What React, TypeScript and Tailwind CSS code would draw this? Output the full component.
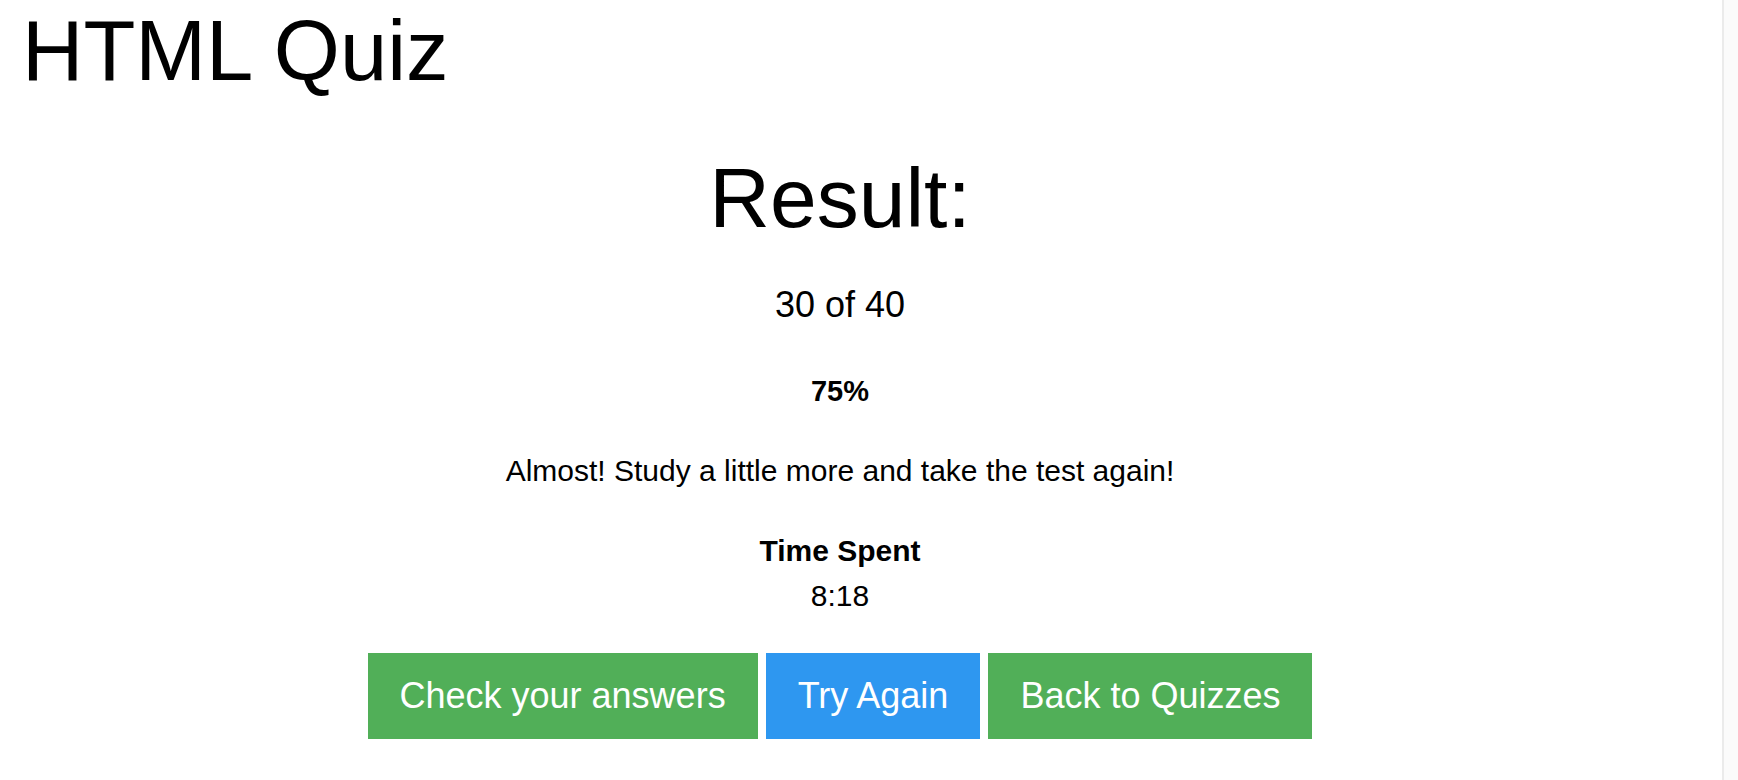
import React from 'react';

const font = { fontFamily: '"Liberation Sans", Arial, sans-serif' };

function App() {
  const score = 30;
  const total = 40;
  const percent = Math.round((score / total) * 100);

  return (
    <div className="flex min-h-[780px] w-full bg-white text-black" style={font}>
      {/* page content */}
      <div className="flex-1 pr-[42px]">
        <h1 className="ml-[22px] mt-[3px] text-[85px] leading-[96px] font-normal">HTML Quiz</h1>

        <div className="flex flex-col items-center text-center">
          <h2 className="mt-[51px] text-[84px] leading-[96px] font-normal">Result:</h2>
          <p className="mt-[39px] text-[36px] leading-[40px]">
            {score} of {total}
          </p>
          <p className="mt-[49px] text-[29px] leading-[34px] font-bold">{percent}%</p>
          <p className="mt-[46px] text-[30px] leading-[34px]">
            Almost! Study a little more and take the test again!
          </p>
          <p className="mt-[46px] text-[30px] leading-[34px] font-bold">Time Spent</p>
          <p className="mt-[11px] text-[30px] leading-[34px]">8:18</p>

          <div className="mt-[40px] flex gap-2">
            <button className="flex h-[86px] items-center bg-[#51af58] px-8 text-[36px] leading-[40px] text-white">
              Check your answers
            </button>
            <button className="flex h-[86px] items-center bg-[#2e97f0] px-8 text-[36px] leading-[40px] text-white">
              Try Again
            </button>
            <button className="flex h-[86px] items-center bg-[#51af58] px-8 text-[36px] leading-[40px] text-white">
              Back to Quizzes
            </button>
          </div>
        </div>
      </div>

      {/* scrollbar track */}
      <div className="w-[16px] shrink-0 border-l-2 border-[#ebebeb] bg-[#fbfbfb]" />
    </div>
  );
}

export default App;
